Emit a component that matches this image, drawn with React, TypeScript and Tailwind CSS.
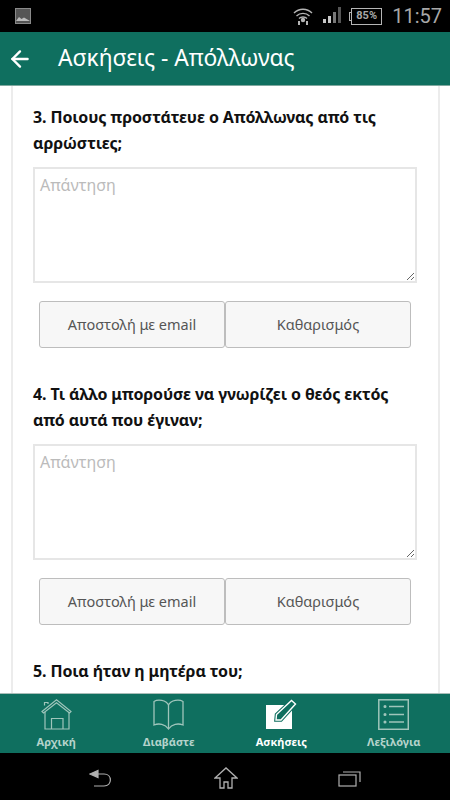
import { ArrowLeft } from 'lucide-react';

const questions = [
  { text: "3. Ποιους προστάτευε ο Απόλλωνας από τις αρρώστιες;" },
  { text: "4. Τι άλλο μπορούσε να γνωρίζει ο θεός εκτός από αυτά που έγιναν;" },
];

const StatusBar = () => (
  <div className="h-[32px] bg-black flex items-center pl-[15px] pr-[8px] shrink-0 text-[#a8a8a8]">
    <svg width="16" height="16" viewBox="0 0 16 16" className="mb-[1px]">
      <rect x="0.5" y="0.5" width="15" height="15" fill="#555" stroke="#8a8a8a" />
      <path d="M1 13 L4 9 L6.5 11 L9 9.5 L15 13 Z" fill="#bbb" />
    </svg>
    <div className="flex-1" />
    <svg width="20" height="20" viewBox="0 0 20 20" fill="none" stroke="#b5b5b5" strokeWidth="1.4" className="mr-[10px]">
      <path d="M1 7 C6 2 14 2 19 7" />
      <path d="M3.5 10 C7 6.5 13 6.5 16.5 10" />
      <path d="M6 12.5 C8 10.5 12 10.5 14 12.5" />
      <circle cx="10" cy="14" r="1.5" fill="#b5b5b5" />
      <path d="M6 15 V19 M14 15 V19" strokeWidth="2" />
    </svg>
    <svg width="19" height="18" viewBox="0 0 19 18" className="mr-[7px]">
      <rect x="0" y="12" width="3" height="4" fill="#c8c8c8" />
      <rect x="5" y="9" width="3" height="7" fill="#c8c8c8" />
      <rect x="10" y="5" width="3" height="11" fill="#777" />
      <rect x="15" y="0" width="3" height="16" fill="#555" />
    </svg>
    <div className="w-[2px] h-[9px] border-l border-y border-[#b5b5b5]" />
    <div className="w-[31px] h-[17px] border border-[#b5b5b5] flex items-center justify-center text-[11px] font-bold mr-[10px] font-['Roboto',sans-serif]">
      85%
    </div>
    <span className="text-[20px] font-['Roboto',sans-serif]">11:57</span>
  </div>
);

const AppBar = () => (
  <div className="h-[54px] bg-[#0f6f5f] border-b border-[#7fa89f] flex items-center shrink-0 text-white">
    <ArrowLeft className="w-[26px] h-[26px] ml-[7px]" strokeWidth={2.2} />
    <span className="ml-[25px] text-[22.8px] font-['Noto_Sans',sans-serif]">Ασκήσεις - Απόλλωνας</span>
  </div>
);

const QuestionBlock = ({ text }: { text: string }) => (
  <div className="mb-[33px]">
    <h3 className="text-[16px] tracking-[-0.12px] leading-[26px] font-bold text-[#111] mb-[11px]">{text}</h3>
    <textarea
      placeholder="Απάντηση"
      className="block w-full h-[116px] border-2 border-[#e6e6e6] px-[5px] py-[4px] text-[16px] leading-[24px] outline-none placeholder:text-[#bbbbbb]"
    />
    <div className="flex mt-[18px] px-[6px]">
      <button className="flex-1 h-[47px] bg-[#f7f7f7] border-[1.5px] border-[#bdbdbd] rounded-[3px] text-[14.5px] text-[#555]">
        Αποστολή με email
      </button>
      <button className="flex-1 h-[47px] bg-[#f7f7f7] border-[1.5px] border-[#bdbdbd] rounded-[3px] text-[14.5px] text-[#555]">
        Καθαρισμός
      </button>
    </div>
  </div>
);

const tabClass = "flex-1 flex flex-col items-center pt-[5px]";
const labelClass = "text-[11px] font-bold leading-[15px] mt-[4px]";
const navStroke = "#9fc5bb";

const BottomTabs = () => (
  <div className="h-[60px] bg-[#0f6f5f] border-t border-[#a9bdb8] flex shrink-0">
    <div className={tabClass + " text-[#b5d3cb]"}>
      <svg width="31" height="31" viewBox="0 0 31 31" fill="none" stroke={navStroke} strokeWidth="1.2">
        <path d="M1 12.5 L15.5 0.8 L30 12.5 L28.5 14 L15.5 3.8 L2.5 14 Z" />
        <path d="M3.5 6.5 V3.5 H7 V5" />
        <path d="M4 13 V30 H28 V13" />
        <path d="M10.5 30 V19.5 H22 V30" />
      </svg>
      <span className={labelClass}>Αρχική</span>
    </div>
    <div className={tabClass + " text-[#b5d3cb]"}>
      <svg width="31" height="31" viewBox="0 0 31 31" fill="none" stroke={navStroke} strokeWidth="1.3">
        <path d="M15.5 6 C13 1 5 0 1 2.5 V26 C6 24 12 25 15.5 30 C19 25 25 24 30 26 V2.5 C26 0 18 1 15.5 6 Z" />
        <path d="M15.5 6 V29" />
      </svg>
      <span className={labelClass}>Διαβάστε</span>
    </div>
    <div className={tabClass + " text-white"}>
      <svg width="31" height="31" viewBox="0 0 31 31">
        <rect x="0" y="6" width="26" height="24" fill="#fff" />
        <path d="M10 21 L10.5 15.5 L25.5 1.5 L29.5 5 L15 21 Z" fill="#0f6f5f" stroke="#0f6f5f" strokeWidth="3.5" />
        <path d="M10 21 L10.5 15.5 L25.5 1.5 L29.5 5 L15 21 Z" fill="#0f6f5f" stroke="#fff" strokeWidth="1.4" />
      </svg>
      <span className={labelClass}>Ασκήσεις</span>
    </div>
    <div className={tabClass + " text-[#b5d3cb]"}>
      <svg width="31" height="31" viewBox="0 0 31 31" fill="none" stroke={navStroke} strokeWidth="1.5">
        <rect x="0.8" y="0.8" width="29.5" height="29.5" />
        <path d="M11 7.5 H26 M11 15.5 H26 M11 23 H26" />
        <circle cx="7" cy="7.5" r="0.8" fill={navStroke} />
        <circle cx="7" cy="15.5" r="0.8" fill={navStroke} />
        <circle cx="7" cy="23" r="0.8" fill={navStroke} />
      </svg>
      <span className={labelClass}>Λεξιλόγια</span>
    </div>
  </div>
);

const SystemNav = () => (
  <div className="h-[47px] bg-black flex items-center shrink-0 pl-[89px] pt-[3px]">
    <svg width="24" height="20" viewBox="0 0 24 20" fill="none" stroke="#b0b0b0" strokeWidth="1.2">
      <path d="M5 6 H15 C23.5 6 23.5 18 15 18 H5" />
      <path d="M1 6 L9 2.5 V9.5 Z" fill="#b0b0b0" />
    </svg>
    <svg width="24" height="24" viewBox="0 0 24 24" fill="none" stroke="#b0b0b0" strokeWidth="1.3" className="ml-[101px]">
      <path d="M1 12 L12 2 L23 12 H18 V22 H14 V16 H10 V22 H6 V12 Z" />
    </svg>
    <svg width="24" height="20" viewBox="0 0 24 20" fill="none" stroke="#b0b0b0" strokeWidth="1.2" className="ml-[100px]">
      <rect x="1" y="7" width="17" height="11" />
      <path d="M5 4 H22 V14" />
    </svg>
  </div>
);

export default function App() {
  return (
    <div className="w-[450px] h-[800px] flex flex-col overflow-hidden bg-white font-['Noto_Sans',sans-serif]">
      <StatusBar />
      <AppBar />
      <div className="flex-1 overflow-hidden pl-[11px] pr-[10px]">
        <div className="h-full border-x-2 border-[#ececec] pl-[20px] pr-[21px] pt-[18px]">
          {questions.map((q, i) => (
            <QuestionBlock key={i} text={q.text} />
          ))}
          <h3 className="text-[16px] tracking-[-0.12px] leading-[26px] font-bold text-[#111]">5. Ποια ήταν η μητέρα του;</h3>
        </div>
      </div>
      <BottomTabs />
      <SystemNav />
    </div>
  );
}
